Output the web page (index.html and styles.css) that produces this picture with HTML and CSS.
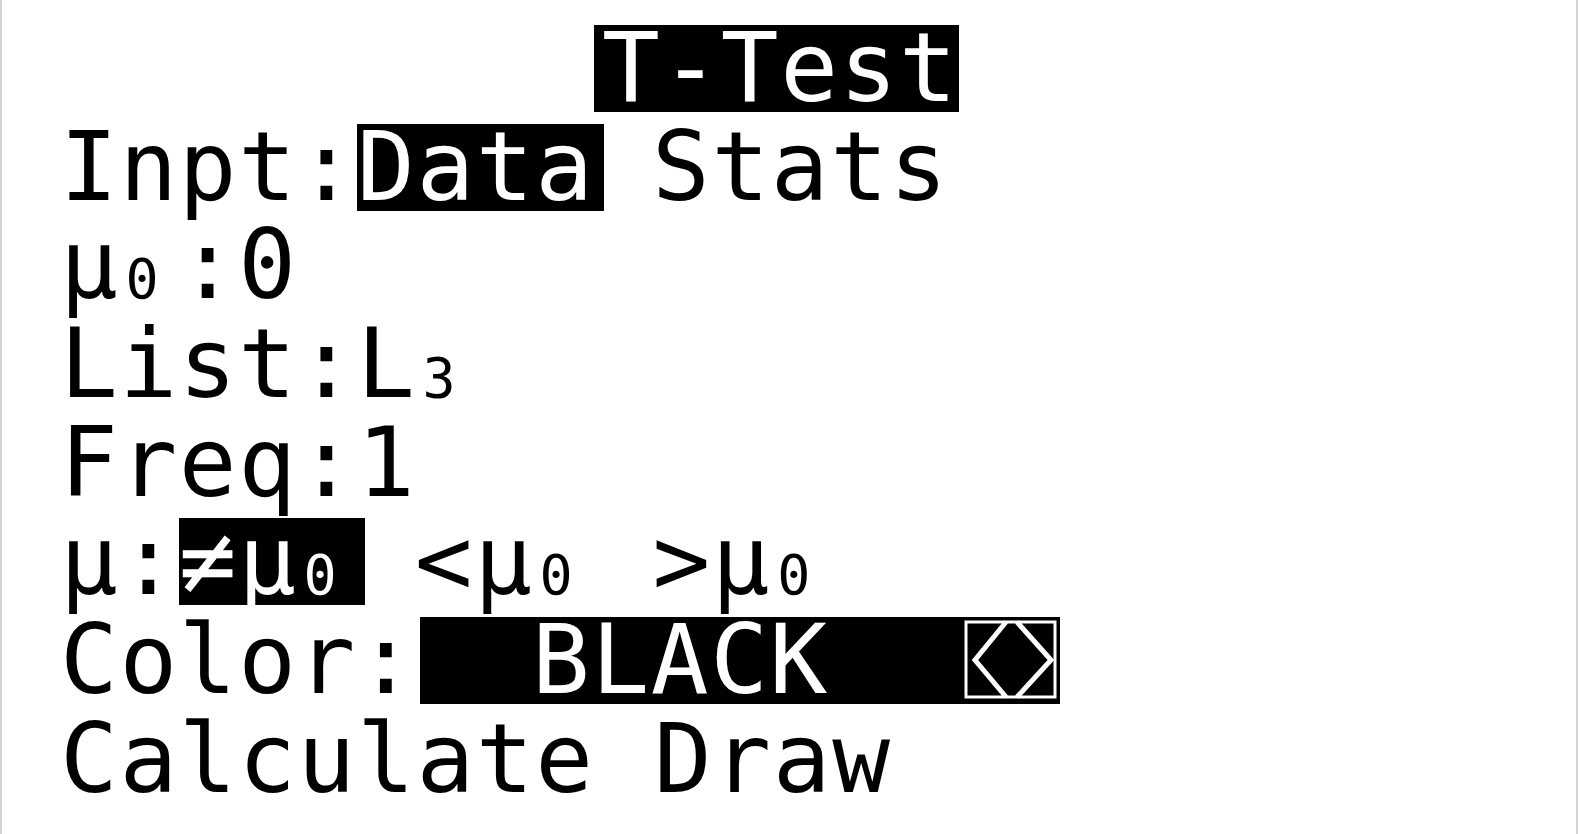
FILE: index.html
```html
<!DOCTYPE html>
<html lang="en">
<head>
  <meta charset="UTF-8">
  <title>T-Test</title>
  <link rel="stylesheet" href="styles.css">
</head>
<body>
  <div class="screen">
    <div class="row title-row"><span class="hl title">T-Test</span></div>
    <div class="row"><span class="label inpt">Inpt:</span><span class="hl data">Data</span><span class="opt stats">Stats</span></div>
    <div class="row"><span class="txt">μ<span class="sub">0</span>:0</span></div>
    <div class="row"><span class="txt">List:L<span class="sub">3</span></span></div>
    <div class="row"><span class="txt">Freq:1</span></div>
    <div class="row">
      <span class="txt">μ:</span><span class="hl alt">≠μ<span class="sub">0</span></span><span class="txt lt">&lt;μ<span class="sub">0</span> &gt;μ<span class="sub">0</span></span>
    </div>
    <div class="row">
      <span class="label color-label">Color:</span>
      <span class="hl color">
        <span class="color-name">BLACK</span>
        <svg class="arrows" width="96" height="82" viewBox="0 0 96 82">
          <rect x="4" y="3" width="89" height="75" fill="none" stroke="#fff" stroke-width="3"/>
          <polyline points="44,3 13,41 44,78" fill="none" stroke="#fff" stroke-width="5"/>
          <polyline points="55,3 89,41 55,78" fill="none" stroke="#fff" stroke-width="5"/>
        </svg>
      </span>
    </div>
    <div class="row"><span class="txt">Calculate Draw</span></div>
  </div>
</body>
</html>
```

FILE: styles.css
```css
body { margin: 0; background: #fff; color: #000; }
.screen { box-sizing: border-box; height: 834px; border-left: 2px solid #d4d4d4; border-right: 2px solid #d4d4d4; padding: 25px 0 0 58px; display: flex; flex-direction: column; gap: 11.7px; font-family: "DejaVu Sans Mono", monospace; font-size: 96px; letter-spacing: 1.6px; }
.row { height: 87px; line-height: 87px; display: flex; align-items: flex-start; white-space: pre; }
.hl { background: #000; color: #fff; height: 87px; }
.sub { display: inline-block; width: 59.4px; font-size: 55px; line-height: 1; letter-spacing: 0; padding-left: 6px; box-sizing: border-box; }
.title-row { padding-left: 534px; }
.title { width: 365px; padding-left: 8px; box-sizing: border-box; }
.inpt { width: 297px; }
.data { width: 247px; }
.stats { margin-left: 48px; }
.alt { width: 186px; }
.lt { margin-left: 50px; }
.color-label { width: 360px; }
.color { width: 640px; display: flex; align-items: flex-start; padding-left: 112px; box-sizing: border-box; }
.arrows { margin: 2px 2px 0 auto; display: block; }
```
